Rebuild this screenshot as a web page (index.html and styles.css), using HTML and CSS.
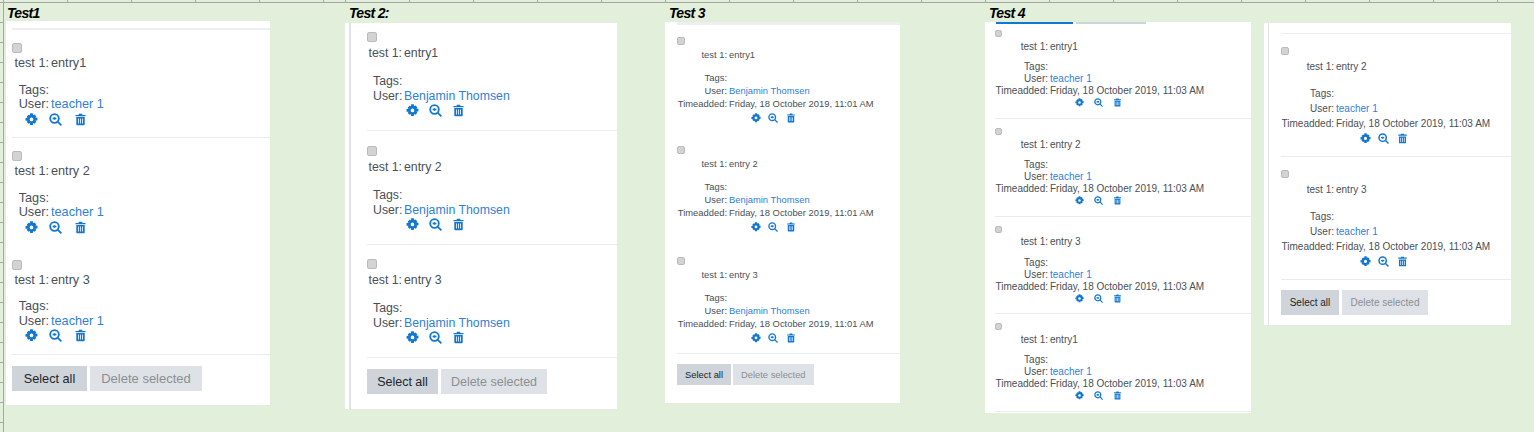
FILE: index.html
```html
<!DOCTYPE html>
<html lang="en">
<head>
<meta charset="utf-8">
<title>Test views</title>
<link rel="stylesheet" href="styles.css">
</head>
<body>
<svg width="0" height="0" class="defs">
  <symbol id="i-cog" viewBox="0 0 12 12"><path fill="currentColor" fill-rule="evenodd" d="M4.8.3h2.4l.3 1.500 1.200-.5 1.700 1.700-.7 1.100 1.800.3v2.400l-1.800.3.7 1.100-1.700 1.700-1.200-.6-.3 1.700H4.800l-.3-1.700-1.200.6-1.700-1.700.7-1.100L.5 7.100V4.700l1.800-.3-.7-1.100 1.700-1.700 1.200.5zM6 4.200a1.700 1.700 0 1 0 0 3.400 1.700 1.700 0 0 0 0-3.400z"/></symbol>
  <symbol id="i-zoom" viewBox="0 0 13 13"><circle cx="5.500" cy="5.500" r="4.300" fill="none" stroke="currentColor" stroke-width="1.800"/><path d="M3.600 5.500h3.800M5.500 4.300v2.400M8.600 8.600l3.800 3.800" stroke="currentColor" stroke-width="1.700" fill="none"/></symbol>
  <symbol id="i-trash" viewBox="-1 -0.500 13 13"><path fill="currentColor" fill-rule="evenodd" d="M4 .3h3l.6 1.100h2.900v1.400H.5V1.400h2.900zM1.300 3.500h8.400v7.400c0 .5-.4.800-.8.800H2.100c-.4 0-.8-.3-.8-.8zM3 5v5h.8V5zm2.100 0v5h.8V5zm2.100 0v5H8V5z"/></symbol>
</svg>

<main class="sheet">

  <section class="col col-1">
    <h2 class="title">Test1</h2>
    <div class="panel panel-1 size-l">
      <div class="rule rule-top"></div>
      <article class="entry">
        <span class="check"></span>
        <dl class="name"><dt>test 1:</dt><dd>entry1</dd></dl>
        <dl class="meta"><dt>Tags:</dt><dd></dd><dt>User:</dt><dd><a>teacher 1</a></dd></dl>
        <div class="acts"><svg class="ic"><use href="#i-cog"/></svg><svg class="ic"><use href="#i-zoom"/></svg><svg class="ic"><use href="#i-trash"/></svg></div>
      </article>
      <article class="entry">
        <span class="check"></span>
        <dl class="name"><dt>test 1:</dt><dd>entry 2</dd></dl>
        <dl class="meta"><dt>Tags:</dt><dd></dd><dt>User:</dt><dd><a>teacher 1</a></dd></dl>
        <div class="acts"><svg class="ic"><use href="#i-cog"/></svg><svg class="ic"><use href="#i-zoom"/></svg><svg class="ic"><use href="#i-trash"/></svg></div>
      </article>
      <article class="entry">
        <span class="check"></span>
        <dl class="name"><dt>test 1:</dt><dd>entry 3</dd></dl>
        <dl class="meta"><dt>Tags:</dt><dd></dd><dt>User:</dt><dd><a>teacher 1</a></dd></dl>
        <div class="acts"><svg class="ic"><use href="#i-cog"/></svg><svg class="ic"><use href="#i-zoom"/></svg><svg class="ic"><use href="#i-trash"/></svg></div>
      </article>
      <div class="btns"><button class="btn sel">Select all</button><button class="btn del">Delete selected</button></div>
    </div>
  </section>

  <section class="col col-2">
    <h2 class="title">Test 2:</h2>
    <div class="panel panel-2 size-l">
      <article class="entry">
        <span class="check"></span>
        <dl class="name"><dt>test 1:</dt><dd>entry1</dd></dl>
        <dl class="meta"><dt>Tags:</dt><dd></dd><dt>User:</dt><dd><a>Benjamin Thomsen</a></dd></dl>
        <div class="acts"><svg class="ic"><use href="#i-cog"/></svg><svg class="ic"><use href="#i-zoom"/></svg><svg class="ic"><use href="#i-trash"/></svg></div>
      </article>
      <article class="entry">
        <span class="check"></span>
        <dl class="name"><dt>test 1:</dt><dd>entry 2</dd></dl>
        <dl class="meta"><dt>Tags:</dt><dd></dd><dt>User:</dt><dd><a>Benjamin Thomsen</a></dd></dl>
        <div class="acts"><svg class="ic"><use href="#i-cog"/></svg><svg class="ic"><use href="#i-zoom"/></svg><svg class="ic"><use href="#i-trash"/></svg></div>
      </article>
      <article class="entry">
        <span class="check"></span>
        <dl class="name"><dt>test 1:</dt><dd>entry 3</dd></dl>
        <dl class="meta"><dt>Tags:</dt><dd></dd><dt>User:</dt><dd><a>Benjamin Thomsen</a></dd></dl>
        <div class="acts"><svg class="ic"><use href="#i-cog"/></svg><svg class="ic"><use href="#i-zoom"/></svg><svg class="ic"><use href="#i-trash"/></svg></div>
      </article>
      <div class="btns"><button class="btn sel">Select all</button><button class="btn del">Delete selected</button></div>
    </div>
  </section>

  <section class="col col-3">
    <h2 class="title">Test 3</h2>
    <div class="panel panel-3 size-s">
      <div class="rule rule-top"></div>
      <article class="entry">
        <span class="check"></span>
        <dl class="name"><dt>test 1:</dt><dd>entry1</dd></dl>
        <dl class="meta"><dt>Tags:</dt><dd></dd><dt>User:</dt><dd><a>Benjamin Thomsen</a></dd><dt>Timeadded:</dt><dd>Friday, 18 October 2019, 11:01 AM</dd></dl>
        <div class="acts"><svg class="ic"><use href="#i-cog"/></svg><svg class="ic"><use href="#i-zoom"/></svg><svg class="ic"><use href="#i-trash"/></svg></div>
      </article>
      <article class="entry">
        <span class="check"></span>
        <dl class="name"><dt>test 1:</dt><dd>entry 2</dd></dl>
        <dl class="meta"><dt>Tags:</dt><dd></dd><dt>User:</dt><dd><a>Benjamin Thomsen</a></dd><dt>Timeadded:</dt><dd>Friday, 18 October 2019, 11:01 AM</dd></dl>
        <div class="acts"><svg class="ic"><use href="#i-cog"/></svg><svg class="ic"><use href="#i-zoom"/></svg><svg class="ic"><use href="#i-trash"/></svg></div>
      </article>
      <article class="entry">
        <span class="check"></span>
        <dl class="name"><dt>test 1:</dt><dd>entry 3</dd></dl>
        <dl class="meta"><dt>Tags:</dt><dd></dd><dt>User:</dt><dd><a>Benjamin Thomsen</a></dd><dt>Timeadded:</dt><dd>Friday, 18 October 2019, 11:01 AM</dd></dl>
        <div class="acts"><svg class="ic"><use href="#i-cog"/></svg><svg class="ic"><use href="#i-zoom"/></svg><svg class="ic"><use href="#i-trash"/></svg></div>
      </article>
      <div class="btns"><button class="btn sel">Select all</button><button class="btn del">Delete selected</button></div>
    </div>
  </section>

  <section class="col col-4">
    <h2 class="title">Test 4</h2>
    <div class="panel panel-4 size-m">
      <div class="tabs"><span class="tab on"></span><span class="tab"></span></div>
      <article class="entry">
        <span class="check"></span>
        <dl class="name"><dt>test 1:</dt><dd>entry1</dd></dl>
        <dl class="meta"><dt>Tags:</dt><dd></dd><dt>User:</dt><dd><a>teacher 1</a></dd><dt>Timeadded:</dt><dd>Friday, 18 October 2019, 11:03 AM</dd></dl>
        <div class="acts"><svg class="ic"><use href="#i-cog"/></svg><svg class="ic"><use href="#i-zoom"/></svg><svg class="ic"><use href="#i-trash"/></svg></div>
      </article>
      <article class="entry">
        <span class="check"></span>
        <dl class="name"><dt>test 1:</dt><dd>entry 2</dd></dl>
        <dl class="meta"><dt>Tags:</dt><dd></dd><dt>User:</dt><dd><a>teacher 1</a></dd><dt>Timeadded:</dt><dd>Friday, 18 October 2019, 11:03 AM</dd></dl>
        <div class="acts"><svg class="ic"><use href="#i-cog"/></svg><svg class="ic"><use href="#i-zoom"/></svg><svg class="ic"><use href="#i-trash"/></svg></div>
      </article>
      <article class="entry">
        <span class="check"></span>
        <dl class="name"><dt>test 1:</dt><dd>entry 3</dd></dl>
        <dl class="meta"><dt>Tags:</dt><dd></dd><dt>User:</dt><dd><a>teacher 1</a></dd><dt>Timeadded:</dt><dd>Friday, 18 October 2019, 11:03 AM</dd></dl>
        <div class="acts"><svg class="ic"><use href="#i-cog"/></svg><svg class="ic"><use href="#i-zoom"/></svg><svg class="ic"><use href="#i-trash"/></svg></div>
      </article>
      <article class="entry">
        <span class="check"></span>
        <dl class="name"><dt>test 1:</dt><dd>entry1</dd></dl>
        <dl class="meta"><dt>Tags:</dt><dd></dd><dt>User:</dt><dd><a>teacher 1</a></dd><dt>Timeadded:</dt><dd>Friday, 18 October 2019, 11:03 AM</dd></dl>
        <div class="acts"><svg class="ic"><use href="#i-cog"/></svg><svg class="ic"><use href="#i-zoom"/></svg><svg class="ic"><use href="#i-trash"/></svg></div>
      </article>
    </div>
  </section>

  <section class="col col-5">
    <div class="panel panel-5 size-x">
      <div class="rule rule-top"></div>
      <article class="entry">
        <span class="check"></span>
        <dl class="name"><dt>test 1:</dt><dd>entry 2</dd></dl>
        <dl class="meta"><dt>Tags:</dt><dd></dd><dt>User:</dt><dd><a>teacher 1</a></dd><dt>Timeadded:</dt><dd>Friday, 18 October 2019, 11:03 AM</dd></dl>
        <div class="acts"><svg class="ic"><use href="#i-cog"/></svg><svg class="ic"><use href="#i-zoom"/></svg><svg class="ic"><use href="#i-trash"/></svg></div>
      </article>
      <article class="entry">
        <span class="check"></span>
        <dl class="name"><dt>test 1:</dt><dd>entry 3</dd></dl>
        <dl class="meta"><dt>Tags:</dt><dd></dd><dt>User:</dt><dd><a>teacher 1</a></dd><dt>Timeadded:</dt><dd>Friday, 18 October 2019, 11:03 AM</dd></dl>
        <div class="acts"><svg class="ic"><use href="#i-cog"/></svg><svg class="ic"><use href="#i-zoom"/></svg><svg class="ic"><use href="#i-trash"/></svg></div>
      </article>
      <div class="btns"><button class="btn sel">Select all</button><button class="btn del">Delete selected</button></div>
    </div>
  </section>

</main>
</body>
</html>
```

FILE: styles.css
```css
* { box-sizing: border-box; }
html, body { margin: 0; padding: 0; }
body {
  width: 1534px;
  height: 432px;
  overflow: hidden;
  font-family: "Liberation Sans", Arial, sans-serif;
  color: #495057;
  background-color: #e2efda;
  background-image:
    linear-gradient(#a6a6a6, #a6a6a6),
    linear-gradient(#a6a6a6, #a6a6a6),
    repeating-linear-gradient(180deg, #a6a6a6 0 1px, transparent 1px 20px);
  background-size: 1534px 1px, 1px 432px, 3px 432px;
  background-position: 0 2px, 3px 0, 0 2px;
  background-repeat: no-repeat;
}
.defs { position: absolute; }

/* spreadsheet column ticks behind the pasted panels */
.sheet::before, .sheet::after {
  content: "";
  position: absolute;
  top: 0;
  height: 2px;
  background-image: repeating-linear-gradient(90deg, #a6a6a6 0 1px, transparent 1px 64px);
}
.sheet::before { left: 3px; width: 342px; }
.sheet::after { left: 345px; width: 1189px; }

.sheet { display: flex; align-items: flex-start; height: 432px; }
.col { display: flex; flex-direction: column; flex: none; }
.col-1 { width: 266px; margin-left: 4px; }
.col-2 { width: 272px; margin-left: 75px; }
.col-3 { width: 235px; margin-left: 48px; }
.col-4 { width: 266px; margin-left: 85px; }
.col-5 { width: 247px; margin-left: 13px; padding-top: 23px; }

.title {
  margin: 6px 0 0 3px;
  height: 15px;
  font-size: 14px;
  line-height: 15px;
  font-weight: bold;
  font-style: italic;
  letter-spacing: -0.7px;
  color: #000;
}
.col-2 .title { margin-left: 4px; height: 17px; }
.col-3 .title { margin-left: 4px; height: 16px; }
.col-4 .title { margin-left: 4px; height: 16px; }

.panel { background: #fff; }
.panel-1 { height: 384px; width: 264px; padding-left: 6px; margin-left: 2px; }
.panel-2 { height: 386px; padding-left: 22px; position: relative; }
.panel-3 { height: 381px; padding-left: 12px; }
.panel-4 { height: 391px; padding-left: 10px; }
.panel-5 { height: 302px; padding-left: 17px; position: relative; }
.panel-2::before, .panel-5::before {
  content: ""; position: absolute; left: 4px; top: 0; bottom: 0; width: 1px; background: #dee2e6;
}
.panel-2::before { width: 2px; }

.rule { height: 1px; background: #eceeef; }
.rule-top { margin-top: 7px; height: 2px; }
.panel-3 .rule-top { margin-top: 0; height: 3px; }
.panel-5 .rule-top { margin-top: 10px; height: 1px; }

.tabs { display: flex; gap: 3px; height: 2px; margin-left: 1px; }
.tab { width: 70px; background: #ced4da; }
.tab.on { width: 77px; background: #1177d1; }

.entry { border-bottom: 1px solid #e9ecef; }
.panel-1 .entry:nth-of-type(2),
.panel-3 .entry:nth-of-type(1),
.panel-3 .entry:nth-of-type(2) { border-bottom-color: transparent; }

.check {
  display: block;
  width: 10px; height: 10px;
  background: #d3d3d3;
  border: 1px solid #bbb;
  border-radius: 2px;
}
.name, .meta {
  margin: 0;
  display: grid;
  column-gap: 2px;
}
dt { text-align: right; }
dd { margin: 0; white-space: nowrap; }
a { color: #2f80d6; }
.acts { display: flex; color: #1177d1; }
.ic { display: block; flex: none; }

.btns { display: flex; }
.btn {
  border: 0;
  padding: 0;
  font-family: inherit;
  color: #212529;
}
.sel { background: #ced4da; }
.del { background: #dee2e6; color: #8b8f93; }

/* large text: test 1 and 2 */
.size-l .name { line-height: 15px; }
.size-l .meta dt, .size-l .meta dd { height: 14.5px; line-height: 14.5px; }
.size-l .ic { width: 13px; height: 13px; }
.size-l .acts { margin-top: 1px; }
.size-l .btn { height: 25px; }

.panel-1 { font-size: 12.7px; }
.panel-1 .entry { height: 108.5px; padding-top: 13px; }
.panel-1 .entry:nth-of-type(1) { height: 108px; }
.panel-1 .name { margin-top: 3px; padding-left: 1px; grid-template-columns: 36px 1fr; }
.panel-1 .meta { margin-top: 11.5px; padding-left: 6px; grid-template-columns: 31px 1fr; }
.panel-1 .acts { padding-left: 12.5px; gap: 11.5px; }
.panel-1 .btns { margin-top: 11px; gap: 3px; }
.panel-1 .btn { font-size: 12.7px; }
.panel-1 .del { font-size: 13px; }
.panel-1 .sel { width: 75px; }
.panel-1 .del { width: 112px; }

.panel-2 { font-size: 12.3px; }
.panel-2 .entry { height: 114px; padding-top: 15px; }
.panel-2 .entry:nth-of-type(1) { height: 108px; padding-top: 9px; }
.panel-2 .entry:nth-of-type(3) { height: 113px; padding-top: 14px; }
.panel-2 .name { margin-top: 4px; padding-left: 1px; grid-template-columns: 34px 1fr; }
.panel-2 .meta { margin-top: 13px; padding-left: 6px; grid-template-columns: 29px 1fr; }
.panel-2 .acts { padding-left: 39px; gap: 10px; }
.panel-2 .btns { margin-top: 11px; gap: 3px; }
.panel-2 .btn { font-size: 12.5px; }
.panel-2 .sel { width: 71px; }
.panel-2 .del { width: 106px; }

/* small text: test 3 */
.size-s { font-size: 9.4px; }
.size-s .entry { height: 109px; padding-top: 12px; }
.size-s .entry:nth-of-type(2) { height: 111px; }
.size-s .check { width: 8px; height: 8px; }
.size-s .name { margin-top: 4px; grid-template-columns: 50px 1fr; line-height: 11px; }
.size-s .meta { margin-top: 11px; grid-template-columns: 50px 1fr; line-height: 13px; }
.size-s .acts { padding-left: 73.5px; margin-top: 2.5px; gap: 7.7px; }
.size-s .ic { width: 10px; height: 10px; }
.size-s .btns { margin-top: 10px; gap: 2px; }
.size-s .btn { font-size: 9.4px; height: 21px; }
.size-s .sel { width: 54px; }
.size-s .del { width: 80.5px; }

/* small text: test 4 */
.size-m { font-size: 10px; }
.size-m .entry { height: 97.5px; padding-top: 9px; }
.size-m .entry:nth-of-type(1) { height: 95px; padding-top: 6px; }
.size-m .check { width: 7px; height: 7px; margin-left: 0; }
.size-m .name { margin-top: 3.5px; grid-template-columns: 53px 1fr; line-height: 12px; }
.size-m .meta { margin-top: 8.5px; grid-template-columns: 53px 1fr; line-height: 12px; }
.size-m .acts { padding-left: 79.5px; margin-top: 1px; gap: 10px; }
.size-m .ic { width: 9px; height: 9px; }

/* small text: test 4 continued */
.size-x { font-size: 10px; }
.size-x .entry { height: 123px; padding-top: 13px; }
.size-x .check { width: 8px; height: 8px; }
.size-x .name { margin-top: 4px; grid-template-columns: 53px 1fr; line-height: 15px; }
.size-x .meta { margin-top: 12px; grid-template-columns: 53px 1fr; line-height: 15px; }
.size-x .acts { padding-left: 78.8px; margin-top: 2px; gap: 7.5px; }
.size-x .ic { width: 11px; height: 11px; }
.size-x .btns { margin-top: 10px; gap: 3px; }
.size-x .btn { font-size: 10px; height: 25px; }
.size-x .sel { width: 58px; }
.size-x .del { width: 86px; }
```
